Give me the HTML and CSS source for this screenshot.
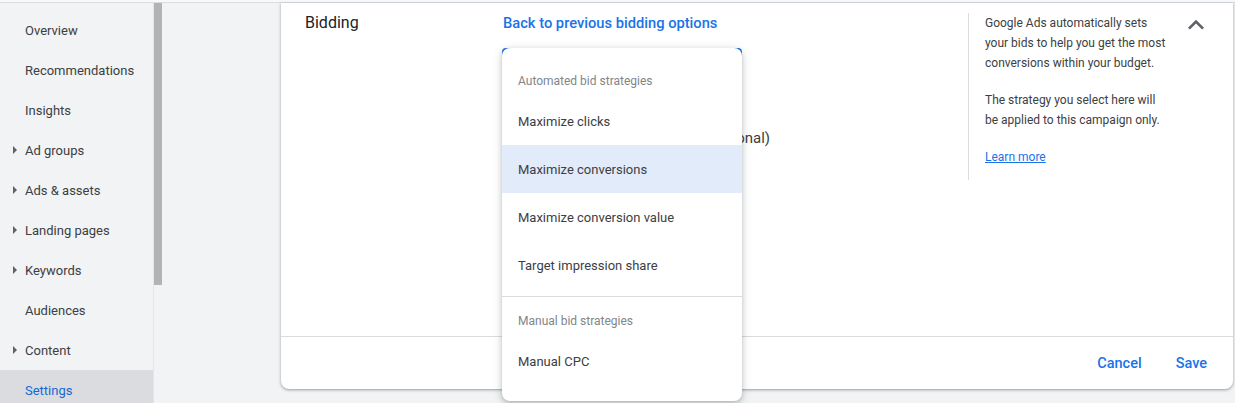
FILE: index.html
```html
<!DOCTYPE html>
<html lang="en">
<head>
<meta charset="utf-8">
<title>Bidding settings</title>
<link rel="stylesheet" href="styles.css">
</head>
<body>
<div class="topbar"></div>
<div class="layout">
  <nav class="sidebar">
    <div class="nav-item"><span class="caret-slot"></span>Overview</div>
    <div class="nav-item"><span class="caret-slot"></span>Recommendations</div>
    <div class="nav-item"><span class="caret-slot"></span>Insights</div>
    <div class="nav-item"><span class="caret-slot"><span class="caret"></span></span>Ad groups</div>
    <div class="nav-item"><span class="caret-slot"><span class="caret"></span></span>Ads &amp; assets</div>
    <div class="nav-item"><span class="caret-slot"><span class="caret"></span></span>Landing pages</div>
    <div class="nav-item"><span class="caret-slot"><span class="caret"></span></span>Keywords</div>
    <div class="nav-item"><span class="caret-slot"></span>Audiences</div>
    <div class="nav-item"><span class="caret-slot"><span class="caret"></span></span>Content</div>
    <div class="nav-item active"><span class="caret-slot"></span>Settings</div>
  </nav>
  <div class="scroll-track"><div class="scroll-thumb"></div></div>
  <main class="main">
    <section class="card">
      <div class="card-body">
        <div class="label-col">Bidding</div>
        <div class="content-col">
          <a class="back-link" href="#">Back to previous bidding options</a>
          <div class="select-field"></div>
          <div class="option-row">Set a target cost per action (optional)</div>
          <div class="menu">
            <div class="menu-group first">
              <div class="menu-header">Automated bid strategies</div>
              <div class="menu-item">Maximize clicks</div>
              <div class="menu-item selected">Maximize conversions</div>
              <div class="menu-item">Maximize conversion value</div>
              <div class="menu-item">Target impression share</div>
            </div>
            <div class="menu-group last">
              <div class="menu-header">Manual bid strategies</div>
              <div class="menu-item">Manual CPC</div>
            </div>
          </div>
        </div>
        <aside class="help-panel">
          <p>Google Ads automatically sets your bids to help you get the most conversions within your budget.</p>
          <p>The strategy you select here will be applied to this campaign only.</p>
          <p><a class="learn-more" href="#">Learn more</a></p>
        </aside>
        <div class="chevron-col">
          <svg class="chevron" viewBox="0 0 24 24" width="32" height="32" aria-hidden="true"><path d="M12 8l-6 6 1.41 1.41L12 10.83l4.59 4.58L18 14z" fill="#5f6368"/></svg>
        </div>
      </div>
      <div class="card-footer">
        <button class="text-btn">Cancel</button>
        <button class="text-btn">Save</button>
      </div>
    </section>
  </main>
</div>
</body>
</html>
```

FILE: styles.css
```css
* { box-sizing: border-box; }

html, body {
  margin: 0;
  padding: 0;
  background: #f1f3f4;
  font-family: Roboto, "Liberation Sans", Arial, sans-serif;
  color: #3c4043;
  overflow: hidden;
}

.topbar {
  height: 3px;
  background: #f8f9fa;
  border-bottom: 1px solid #dadce0;
}

.layout {
  display: flex;
  align-items: flex-start;
  height: 400px;
}

.sidebar {
  width: 154px;
  flex: none;
  height: 400px;
  padding-top: 7px;
  background: #f1f3f4;
  border-right: 1px solid #e3e5e8;
}

.nav-item {
  height: 40px;
  display: flex;
  align-items: center;
  padding-left: 13px;
  font-size: 13px;
  color: #3c4043;
  white-space: nowrap;
}

.nav-item.active {
  background: #dadce0;
  color: #1967d2;
}

.caret-slot {
  width: 12px;
  flex: none;
  display: flex;
  align-items: center;
}

.caret {
  width: 0;
  height: 0;
  border-top: 4px solid transparent;
  border-bottom: 4px solid transparent;
  border-left: 4px solid #5f6368;
}

.scroll-track {
  width: 8px;
  flex: none;
}

.scroll-thumb {
  width: 8px;
  height: 282px;
  background: #b3b3b3;
}

.main {
  flex: 1;
  padding-left: 119px;
}

.card {
  width: 952px;
  height: 386px;
  background: #fff;
  border-radius: 0 0 8px 8px;
  box-shadow: 0 1px 2px rgba(60, 64, 67, 0.3), 0 1px 3px 1px rgba(60, 64, 67, 0.15);
  display: flex;
  flex-direction: column;
}

.card-body {
  height: 334px;
  display: flex;
  align-items: flex-start;
  border-bottom: 1px solid #dadce0;
}

.label-col {
  width: 222px;
  flex: none;
  padding: 9px 0 0 24px;
  font-size: 16px;
  line-height: 22px;
  color: #202124;
}

.content-col {
  position: relative;
  width: 465px;
  flex: none;
  padding-top: 10px;
}

.back-link {
  display: block;
  font-size: 14.7px;
  font-weight: 500;
  line-height: 20px;
  color: #1a73e8;
  text-decoration: none;
}

.select-field {
  margin: 15px 0 0 -1px;
  width: 240px;
  height: 56px;
  border: 2px solid #1a73e8;
  border-radius: 4px;
}

.option-row {
  margin-top: 24px;
  width: 267px;
  font-size: 15px;
  line-height: 20px;
  text-align: right;
  white-space: nowrap;
  overflow: hidden;
  color: #3c4043;
}

.menu {
  position: absolute;
  left: -1px;
  top: 45px;
  width: 240px;
  background: #fff;
  border-radius: 8px;
  box-shadow: 0 2px 4px rgba(60, 64, 67, 0.25), 0 2px 8px 2px rgba(60, 64, 67, 0.12);
  z-index: 2;
}

.menu-group.first {
  padding: 8px 0 7px;
  border-bottom: 1px solid #dadce0;
}

.menu-group.last {
  padding-bottom: 16px;
}

.menu-header {
  padding: 17px 16px 8px;
  font-size: 12px;
  line-height: 16px;
  color: #80868b;
}

.menu-group.last .menu-header {
  padding-top: 16px;
  padding-bottom: 8px;
}

.menu-item {
  height: 48px;
  display: flex;
  align-items: center;
  padding: 0 16px;
  font-size: 13px;
  color: #3c4043;
}

.menu-item.selected {
  background: #e2ebfa;
}

.help-panel {
  margin-top: 10px;
  width: 201px;
  flex: none;
  height: 167px;
  border-left: 1px solid #dadce0;
  padding-left: 16px;
  font-size: 12px;
  line-height: 20px;
  color: #3c4043;
}

.help-panel p {
  margin: 0 0 17px;
  width: 184px;
}

.help-panel p:first-child {
  margin-top: -0.5px;
}

.learn-more {
  color: #1a73e8;
  text-decoration: underline;
}

.chevron-col {
  padding: 6px 0 0 11px;
}

.chevron {
  display: block;
}

.card-footer {
  flex: 1;
  display: flex;
  align-items: center;
  justify-content: flex-end;
  gap: 34px;
  padding: 1px 26px 0 0;
}

.text-btn {
  border: 0;
  background: none;
  padding: 0;
  font-family: Roboto, "Liberation Sans", Arial, sans-serif;
  font-size: 14.5px;
  font-weight: 500;
  color: #1a73e8;
  cursor: pointer;
}
```
